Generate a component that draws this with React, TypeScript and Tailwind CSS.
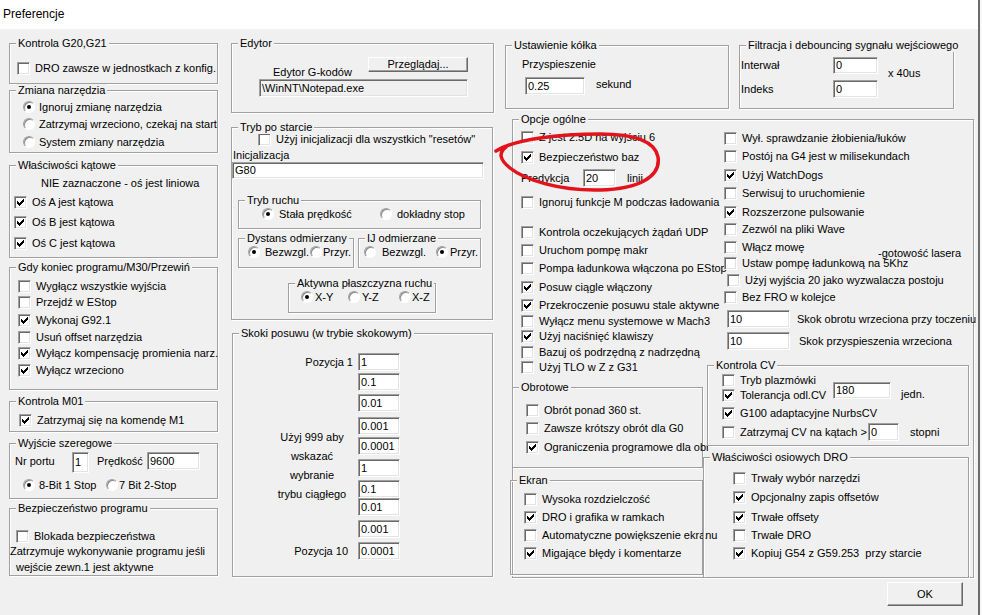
import React from 'react';

type Props = { className?: string; children?: React.ReactNode };

// klasyczny "ptaszek" 7x7 z Windows
const Tick = () => (
  <svg width="7" height="7" viewBox="0 0 7 7" shapeRendering="crispEdges">
    <path
      d="M6 0h1v1h-1zM5 1h2v1h-2zM0 2h1v1h-1zM4 2h3v1h-3zM0 3h2v1h-2zM3 3h3v1h-3zM0 4h5v1h-5zM1 5h3v1h-3zM2 6h1v1h-1z"
      fill="#000"
    />
  </svg>
);

const Check = ({ checked }: { checked?: boolean }) => (
  <span className="flex items-center justify-center shrink-0 w-[13px] h-[13px] bg-white border border-[#a0a0a0] border-b-white border-r-white shadow-[inset_1px_1px_0_#696969,inset_-1px_-1px_0_#e3e3e3]">
    {checked && <Tick />}
  </span>
);

const Radio = ({ on }: { on?: boolean }) => (
  <span className="flex items-center justify-center shrink-0 w-[12px] h-[12px] rounded-full bg-white border border-[#a0a0a0] border-b-white border-r-white shadow-[inset_1px_1px_0_#8a8a8a]">
    {on && <span className="w-[4px] h-[4px] rounded-full bg-black" />}
  </span>
);

const Field = ({ value, className = '', ro }: { value: string; className?: string; ro?: boolean }) => (
  <div
    className={`flex items-center shrink-0 pl-[2px] whitespace-nowrap overflow-hidden border border-[#a0a0a0] border-b-white border-r-white shadow-[inset_1px_1px_0_#696969,inset_-1px_-1px_0_#e3e3e3] ${ro ? 'bg-[#f0f0f0]' : 'bg-white'} ${className}`}
  >
    {value}
  </div>
);

const Btn = ({ className = '', children }: Props) => (
  <button
    type="button"
    className={`flex items-center justify-center shrink-0 bg-[#f0f0f0] border border-white border-b-[#696969] border-r-[#696969] shadow-[inset_-1px_-1px_0_#a0a0a0] ${className}`}
  >
    {children}
  </button>
);

const Group = ({ title, className = '', children }: Props & { title: string }) => (
  <div className={`relative shrink-0 border border-[#a0a0a0] shadow-[inset_1px_1px_0_#fff,1px_1px_0_#fff] ${className}`}>
    <span className="absolute left-[6px] -top-[7px] px-[2px] bg-[#f0f0f0] leading-[13px] whitespace-nowrap">{title}</span>
    {children}
  </div>
);

const CheckRow = ({ label, checked, className = '' }: { label: string; checked?: boolean; className?: string }) => (
  <div className={`flex items-center h-[16px] whitespace-nowrap ${className}`}>
    <Check checked={checked} />
    <span className="ml-[5px]">{label}</span>
  </div>
);

const RadioRow = ({ label, on, className = '' }: { label: string; on?: boolean; className?: string }) => (
  <div className={`flex items-center h-[16px] whitespace-nowrap ${className}`}>
    <Radio on={on} />
    <span className="ml-[4px]">{label}</span>
  </div>
);

const opcjeLeft: [string, boolean, string][] = [
  ['Kontrola oczekujących żądań UDP', false, 'mt-[14px]'],
  ['Uruchom pompę makr', false, 'mt-[2px]'],
  ['Pompa ładunkowa włączona po EStop', false, 'mt-[2px]'],
  ['Posuw ciągle włączony', true, 'mt-[3px]'],
  ['Przekroczenie posuwu stale aktywne', true, 'mt-[2px]'],
  ['Wyłącz menu systemowe w Mach3', false, 'mt-0'],
  ['Użyj naciśnięć klawiszy', true, '-mt-[1px]'],
  ['Bazuj oś podrzędną z nadrzędną', false, 'mt-0'],
  ['Użyj TLO w Z z G31', false, '-mt-[1px]'],
];

const opcjeRight: [string, boolean, string][] = [
  ['Wył. sprawdzanie żłobienia/łuków', false, 'mt-[10px]'],
  ['Postój na G4 jest w milisekundach', false, 'mt-[2px]'],
  ['Użyj WatchDogs', true, 'mt-[3px]'],
  ['Serwisuj to uruchomienie', false, 'mt-[2px]'],
  ['Rozszerzone pulsowanie', true, 'mt-[3px]'],
  ['Zezwól na pliki Wave', false, 'mt-[1px]'],
];

const skoki: [string, string][] = [
  ['1', 'mt-[19px]'],
  ['0.1', 'mt-[2px]'],
  ['0.01', 'mt-[3px]'],
  ['0.001', 'mt-[5px]'],
  ['0.0001', 'mt-[2px]'],
  ['1', 'mt-[4px]'],
  ['0.1', 'mt-[3px]'],
  ['0.01', 'mt-0'],
  ['0.001', 'mt-[4px]'],
  ['0.0001', 'mt-[4px]'],
];

const LeftColumn = () => (
  <div className="ml-[9px] pt-[14px] flex flex-col w-[209px] shrink-0">
    <Group title="Kontrola G20,G21" className="w-[209px] h-[41px]">
      <div className="pl-[7px] pt-[16px]">
        <CheckRow label="DRO zawsze w jednostkach z konfig." />
      </div>
    </Group>

    <Group title="Zmiana narzędzia" className="mt-[6px] w-[209px] h-[63px]">
      <div className="pl-[13px] pt-[8px] flex flex-col">
        <RadioRow label="Ignoruj zmianę narzędzia" on />
        <RadioRow label="Zatrzymaj wrzeciono, czekaj na start" className="mt-[1px]" />
        <RadioRow label="System zmiany narzędzia" className="mt-[2px]" />
      </div>
    </Group>

    <Group title="Właściwości kątowe" className="mt-[12px] w-[209px] h-[93px]">
      <div className="pt-[10px] flex flex-col">
        <div className="h-[14px] pl-[31px] flex items-center whitespace-nowrap">NIE zaznaczone - oś jest liniowa</div>
        <div className="pl-[4px] flex flex-col">
          <CheckRow label="Oś A jest kątowa" checked className="mt-[4px]" />
          <CheckRow label="Oś B jest kątowa" checked className="mt-[4px]" />
          <CheckRow label="Oś C jest kątowa" checked className="mt-[5px]" />
        </div>
      </div>
    </Group>

    <Group title="Gdy koniec programu/M30/Przewiń" className="mt-[9px] w-[209px] h-[123px]">
      <div className="pl-[8px] pt-[10px] flex flex-col">
        <CheckRow label="Wygłącz wszystkie wyjścia" />
        <CheckRow label="Przejdź w EStop" />
        <CheckRow label="Wykonaj G92.1" checked className="mt-[2px]" />
        <CheckRow label="Usuń offset narzędzia" className="mt-[1px]" />
        <CheckRow label="Wyłącz kompensację promienia narz." checked />
        <CheckRow label="Wyłącz wrzeciono" checked className="mt-[1px]" />
      </div>
    </Group>

    <Group title="Kontrola M01" className="mt-[11px] w-[209px] h-[31px]">
      <div className="pl-[9px] pt-[10px]">
        <CheckRow label="Zatrzymaj się na komendę M1" checked />
      </div>
    </Group>

    <Group title="Wyjście szeregowe" className="mt-[11px] w-[209px] h-[56px]">
      <div className="pl-[5px] pt-[8px] flex flex-col">
        <div className="flex items-start">
          <span className="w-[57px] mt-[3px]">Nr portu</span>
          <Field value="1" className="w-[17px] h-[21px]" />
          <span className="w-[50px] ml-[8px] mt-[3px]">Prędkość</span>
          <Field value="9600" className="w-[53px] h-[18px]" />
        </div>
        <div className="flex items-center h-[12px] mt-[6px] pl-[8px] whitespace-nowrap">
          <div className="flex items-center w-[83px]">
            <Radio on />
            <span className="ml-[4px]">8-Bit 1 Stop</span>
          </div>
          <Radio />
          <span className="ml-[1px]">7 Bit 2-Stop</span>
        </div>
      </div>
    </Group>

    <Group title="Bezpieczeństwo programu" className="mt-[9px] w-[209px] h-[68px]">
      <div className="pt-[19px] flex flex-col whitespace-nowrap">
        <CheckRow label="Blokada bezpieczeństwa" className="pl-[6px]" />
        <div className="h-[15px] flex items-center">Zatrzymuje wykonywanie programu jeśli</div>
        <div className="h-[16px] pl-[6px] flex items-center">wejście zewn.1 jest aktywne</div>
      </div>
    </Group>
  </div>
);

const MiddleColumn = () => (
  <div className="ml-[13px] pt-[14px] flex flex-col w-[263px] shrink-0">
    <Group title="Edytor" className="w-[263px] h-[70px]">
      <div className="pt-[13px] flex flex-col">
        <div className="flex items-start h-[15px] pl-[41px]">
          <span className="w-[95px] mt-[9px] whitespace-nowrap">Edytor G-kodów</span>
          <Btn className="w-[100px] h-[15px]">Przeglądaj...</Btn>
        </div>
        <Field value="\WinNT\Notepad.exe" ro className="ml-[27px] mt-[7px] w-[209px] h-[18px]" />
      </div>
    </Group>

    <Group title="Tryb po starcie" className="mt-[14px] w-[262px] h-[193px]">
      <div className="flex flex-col">
        <CheckRow label={'Użyj inicjalizacji dla wszystkich "resetów"'} className="pl-[26px] mt-[3px]" />
        <div className="h-[14px] pl-[1px] mt-[1px] flex items-center">Inicjalizacja</div>
        <Field value="G80" className="w-[252px] h-[17px]" />

        <Group title="Tryb ruchu" className="ml-[6px] mt-[21px] w-[243px] h-[29px]">
          <div className="pt-[7px] pl-[23px] flex items-center h-[19px] whitespace-nowrap">
            <div className="flex items-center w-[118px]">
              <Radio on />
              <span className="ml-[5px]">Stała prędkość</span>
            </div>
            <Radio />
            <span className="ml-[5px]">dokładny stop</span>
          </div>
        </Group>

        <div className="flex ml-[6px] mt-[9px]">
          <Group title="Dystans odmierzany" className="w-[116px] h-[30px]">
            <div className="pt-[7px] pl-[9px] flex items-center h-[19px] whitespace-nowrap">
              <div className="flex items-center w-[62px]">
                <Radio on />
                <span className="ml-[5px]">Bezwzgl.</span>
              </div>
              <Radio />
              <span className="ml-[1px]">Przyr.</span>
            </div>
          </Group>
          <Group title="IJ odmierzane" className="ml-[4px] w-[123px] h-[30px]">
            <div className="pt-[7px] pl-[5px] flex items-center h-[19px] whitespace-nowrap">
              <div className="flex items-center w-[72px]">
                <Radio />
                <span className="ml-[6px]">Bezwzgl.</span>
              </div>
              <Radio on />
              <span className="ml-[2px]">Przyr.</span>
            </div>
          </Group>
        </div>

        <Group title="Aktywna płaszczyzna ruchu" className="ml-[56px] mt-[15px] w-[148px] h-[30px]">
          <div className="pt-[7px] pl-[12px] flex items-center h-[19px] whitespace-nowrap">
            <div className="flex items-center w-[47px]">
              <Radio on />
              <span className="ml-[2px]">X-Y</span>
            </div>
            <div className="flex items-center w-[51px]">
              <Radio />
              <span className="ml-[2px]">Y-Z</span>
            </div>
            <Radio />
            <span className="ml-[1px]">X-Z</span>
          </div>
        </Group>
      </div>
    </Group>

    <Group title="Skoki posuwu (w trybie skokowym)" className="mt-[13px] ml-[1px] w-[261px] h-[244px]">
      <div className="flex items-start whitespace-nowrap">
        <div className="w-[125px] flex flex-col">
          <div className="mt-[19px] h-[18px] pr-[5px] flex items-center justify-end">Pozycja 1</div>
          <div className="mt-[57px] pl-[33px] text-center leading-[19px]">
            <div>Użyj 999 aby</div>
            <div>wskazać</div>
            <div>wybranie</div>
            <div>trybu ciągłego</div>
          </div>
          <div className="mt-[38px] h-[18px] pr-[10px] flex items-center justify-end">Pozycja 10</div>
        </div>
        <div className="flex flex-col">
          {skoki.map(([v, mt], i) => (
            <Field key={i} value={v} className={`w-[42px] h-[18px] ${mt}`} />
          ))}
        </div>
      </div>
    </Group>
  </div>
);

const RightColumn = () => (
  <div className="ml-[11px] pt-[16px] flex flex-col w-[468px] shrink-0">
    <div className="flex items-start">
      <Group title="Ustawienie kółka" className="w-[224px] h-[64px]">
        <div className="pl-[16px] pt-[11px] flex flex-col">
          <div className="h-[14px] flex items-center">Przyspieszenie</div>
          <div className="mt-[6px] flex items-center">
            <Field value="0.25" className="ml-[3px] w-[60px] h-[18px]" />
            <span className="ml-[11px] -mt-[3px]">sekund</span>
          </div>
        </div>
      </Group>

      <Group title="Filtracja i debouncing sygnału wejściowego" className="ml-[10px] w-[215px] h-[64px]">
        <div className="pt-[11px] pl-[1px] flex items-start">
          <div className="flex flex-col">
            <div className="flex items-center h-[17px]">
              <span className="w-[92px]">Interwał</span>
              <Field value="0" className="w-[45px] h-[17px]" />
            </div>
            <div className="flex items-center h-[18px] mt-[6px]">
              <span className="w-[92px]">Indeks</span>
              <Field value="0" className="w-[45px] h-[18px]" />
            </div>
          </div>
          <span className="ml-[10px] mt-[10px] whitespace-nowrap">x 40us</span>
        </div>
      </Group>
    </div>

    <Group title="Opcje ogólne" className="mt-[10px] ml-[7px] w-[462px] h-[459px]">
      <div className="flex items-start">
        <div className="w-[190px] shrink-0 flex flex-col">
          <div className="pl-[8px] flex flex-col">
            <CheckRow label="Z jest 2.5D na wyjściu 6" className="mt-[9px]" />
            <CheckRow label="Bezpieczeństwo baz" checked className="mt-[4px]" />
            <div className="mt-[5px] h-[16px] flex items-center whitespace-nowrap">
              <span className="w-[62px]">Predykcja</span>
              <Field value="20" className="w-[33px] h-[18px]" />
              <span className="ml-[11px]">linii</span>
            </div>
            <CheckRow label="Ignoruj funkcje M podczas ładowania" className="mt-[8px]" />
            {opcjeLeft.map(([l, c, mt]) => (
              <CheckRow key={l} label={l} checked={c} className={mt} />
            ))}
          </div>

          <Group title="Obrotowe" className="-ml-[1px] mt-[12px] w-[191px] h-[81px]">
            <div className="pl-[13px] flex flex-col">
              <CheckRow label="Obrót ponad 360 st." className="mt-[14px]" />
              <CheckRow label="Zawsze krótszy obrót dla G0" className="mt-[2px]" />
              <CheckRow label="Ograniczenia programowe dla obr" checked className="mt-[3px]" />
            </div>
          </Group>

          <Group title="Ekran" className="-ml-[3px] mt-[12px] w-[193px] h-[95px]">
            <div className="pl-[13px] flex flex-col">
              <CheckRow label="Wysoka rozdzielczość" className="mt-[10px]" />
              <CheckRow label="DRO i grafika w ramkach" checked className="mt-[2px]" />
              <CheckRow label="Automatyczne powiększenie ekranu" className="mt-[2px]" />
              <CheckRow label="Migające błędy i komentarze" checked className="mt-[2px]" />
            </div>
          </Group>
        </div>

        <div className="w-[265px] shrink-0 flex flex-col">
          <div className="pl-[21px] flex flex-col">
            {opcjeRight.map(([l, c, mt]) => (
              <CheckRow key={l} label={l} checked={c} className={mt} />
            ))}
            <div className="mt-[2px] h-[16px] flex items-start whitespace-nowrap">
              <div className="w-[154px] h-[16px] flex items-center">
                <Check />
                <span className="ml-[5px]">Włącz mowę</span>
              </div>
              <span className="mt-[8px]">-gotowość lasera</span>
            </div>
            <CheckRow label="Ustaw pompę ładunkową na 5Khz" />
            <CheckRow label="Użyj wyjścia 20 jako wyzwalacza postoju" className="mt-[1px] pl-[3px]" />
            <CheckRow label="Bez FRO w kolejce" className="mt-[1px]" />
          </div>

          <div className="pl-[24px] flex flex-col whitespace-nowrap">
            <div className="mt-[5px] h-[18px] flex items-center">
              <Field value="10" className="w-[63px] h-[18px]" />
              <span className="ml-[7px]">Skok obrotu wrzeciona przy toczeniu</span>
            </div>
            <div className="mt-[4px] h-[18px] flex items-center">
              <Field value="10" className="w-[63px] h-[18px]" />
              <span className="ml-[9px]">Skok przyspieszenia wrzeciona</span>
            </div>
          </div>

          <Group title="Kontrola CV" className="ml-[4px] mt-[15px] w-[262px] h-[81px]">
            <div className="pl-[14px] flex flex-col whitespace-nowrap">
              <CheckRow label="Tryb plazmówki" className="mt-[6px]" />
              <div className="-mt-[1px] h-[16px] flex items-start">
                <div className="w-[111px] h-[16px] flex items-center">
                  <Check checked />
                  <span className="ml-[5px]">Tolerancja odl.CV</span>
                </div>
                <Field value="180" className="-mt-[5px] w-[58px] h-[17px]" />
                <span className="ml-[10px] mt-[1px]">jedn.</span>
              </div>
              <CheckRow label="G100 adaptacyjne NurbsCV" checked className="mt-[2px]" />
              <div className="mt-[3px] h-[16px] flex items-center">
                <div className="w-[146px] flex items-center">
                  <Check />
                  <span className="ml-[5px]">Zatrzymaj CV na kątach &gt;</span>
                </div>
                <Field value="0" className="w-[31px] h-[18px]" />
                <span className="ml-[11px]">stopni</span>
              </div>
            </div>
          </Group>

          <Group title="Właściwości osiowych DRO" className="mt-[11px] w-[266px] h-[121px]">
            <div className="pl-[29px] flex flex-col">
              <CheckRow label="Trwały wybór narzędzi" className="mt-[12px]" />
              <CheckRow label="Opcjonalny zapis offsetów" checked className="mt-[3px]" />
              <CheckRow label="Trwałe offsety" checked className="mt-[4px]" />
              <CheckRow label="Trwałe DRO" className="mt-[2px]" />
              <CheckRow label={'Kopiuj G54 z G59.253 \u00a0przy starcie'} checked className="mt-[2px]" />
            </div>
          </Group>
        </div>
      </div>
    </Group>

    <div className="mt-[4px] pr-[10px] flex justify-end">
      <Btn className="w-[76px] h-[24px]">OK</Btn>
    </div>
  </div>
);

export default function App() {
  return (
    <div className="relative w-[982px] h-[615px] overflow-hidden flex bg-[#f0f0f0] text-black text-[11px] leading-[13px] font-['Liberation_Sans',Arial,sans-serif]">
      <div className="w-[978px] h-full flex flex-col shrink-0">
        <div className="h-[29px] bg-white flex items-center pl-[3px] text-[12px] shrink-0">Preferencje</div>
        <div className="flex items-start">
          <LeftColumn />
          <MiddleColumn />
          <RightColumn />
        </div>
      </div>
      <div className="w-[2px] h-full bg-[#6b6b6b] shrink-0" />
      <div className="flex-1 h-full bg-[#f7f7f7]" />

      {/* odręczne zaznaczenie na czerwono */}
      <svg className="absolute inset-0 pointer-events-none" width="982" height="615" viewBox="0 0 982 615">
        <path
          d="M496 151 C515 139, 560 134, 600 134 C635 134, 655 141, 658 157 C661 176, 640 189, 600 190 C560 191, 525 180, 510 168 C500 160, 498 153, 506 147"
          fill="none"
          stroke="#e3131b"
          strokeWidth="3.5"
          strokeLinecap="round"
        />
      </svg>
    </div>
  );
}
